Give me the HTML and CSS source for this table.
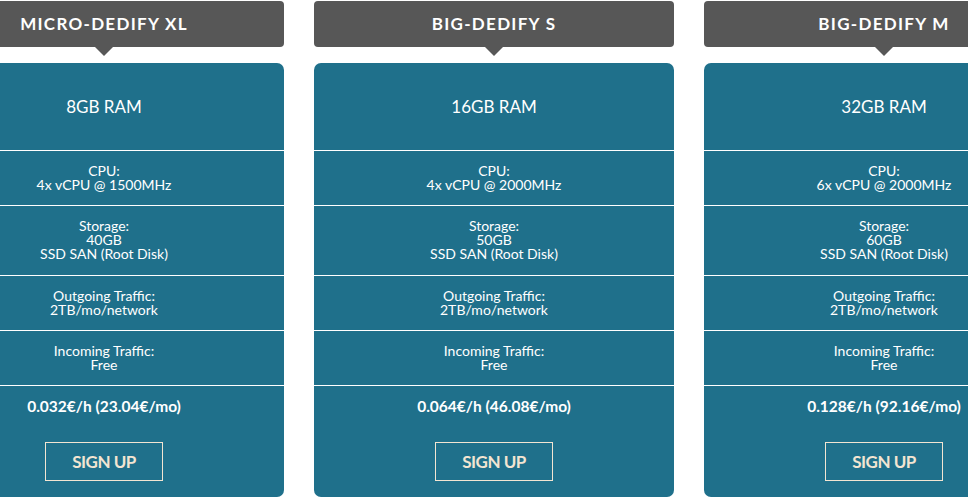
FILE: index.html
```html
<!DOCTYPE html>
<html>
<head>
<meta charset="utf-8">
<link rel="stylesheet" href="styles.css">
</head>
<body>
<div class="plans">
  <div class="plan">
    <div class="plan-head">MICRO-DEDIFY XL</div>
    <div class="plan-body">
      <div class="row row-ram">8GB RAM</div>
      <div class="row">CPU:<br>4x vCPU @ 1500MHz</div>
      <div class="row">Storage:<br>40GB<br>SSD SAN (Root Disk)</div>
      <div class="row">Outgoing Traffic:<br>2TB/mo/network</div>
      <div class="row">Incoming Traffic:<br>Free</div>
      <div class="row row-price">
        <div class="price">0.032€/h (23.04€/mo)</div>
        <a class="signup" href="#">SIGN UP</a>
      </div>
    </div>
  </div>
  <div class="plan">
    <div class="plan-head">BIG-DEDIFY S</div>
    <div class="plan-body">
      <div class="row row-ram">16GB RAM</div>
      <div class="row">CPU:<br>4x vCPU @ 2000MHz</div>
      <div class="row">Storage:<br>50GB<br>SSD SAN (Root Disk)</div>
      <div class="row">Outgoing Traffic:<br>2TB/mo/network</div>
      <div class="row">Incoming Traffic:<br>Free</div>
      <div class="row row-price">
        <div class="price">0.064€/h (46.08€/mo)</div>
        <a class="signup" href="#">SIGN UP</a>
      </div>
    </div>
  </div>
  <div class="plan">
    <div class="plan-head">BIG-DEDIFY M</div>
    <div class="plan-body">
      <div class="row row-ram">32GB RAM</div>
      <div class="row">CPU:<br>6x vCPU @ 2000MHz</div>
      <div class="row">Storage:<br>60GB<br>SSD SAN (Root Disk)</div>
      <div class="row">Outgoing Traffic:<br>2TB/mo/network</div>
      <div class="row">Incoming Traffic:<br>Free</div>
      <div class="row row-price">
        <div class="price">0.128€/h (92.16€/mo)</div>
        <a class="signup" href="#">SIGN UP</a>
      </div>
    </div>
  </div>
</div>
</body>
</html>
```
FILE: styles.css
```css
html, body {
  margin: 0;
  padding: 0;
  background: #ffffff;
  overflow: hidden;
}
body {
  font-family: Lato, "Open Sans", sans-serif;
  color: #ffffff;
}
.plans {
  display: flex;
  gap: 30px;
  margin-left: -76px;
  padding-top: 1px;
}
.plan {
  flex: 0 0 360px;
  width: 360px;
}
.plan-head {
  position: relative;
  height: 46px;
  line-height: 46px;
  background: #575757;
  border-radius: 4px;
  text-align: center;
  font-weight: 700;
  font-size: 17px;
  letter-spacing: 1.3px;
  color: #ffffff;
}
.plan-head::after {
  content: "";
  position: absolute;
  left: 50%;
  top: 46px;
  margin-left: -9px;
  border-left: 9px solid transparent;
  border-right: 9px solid transparent;
  border-top: 9px solid #575757;
}
.plan-body {
  margin-top: 16px;
  background: #1f708b;
  border-radius: 7px;
  text-align: center;
}
.row {
  border-top: 1px solid #ffffff;
  font-size: 14px;
  line-height: 14px;
  padding: 13px 0 13px;
  height: 28px;
}
.row:nth-child(3) {
  height: 42px;
  padding: 13px 0 14px;
}
.row-ram {
  border-top: none;
  height: 87px;
  padding: 0;
  line-height: 87px;
  font-size: 17px;
}
.row-price {
  height: auto;
  padding: 12px 0 16px;
}
.price {
  font-weight: 700;
  font-size: 15.5px;
  line-height: 16px;
}
.signup {
  display: block;
  box-sizing: border-box;
  width: 118px;
  height: 39px;
  margin: 28px auto 0;
  border: 1px solid #f3e5d2;
  color: #f3e5d2;
  text-decoration: none;
  font-weight: 700;
  font-size: 17px;
  line-height: 37px;
  letter-spacing: -0.5px;
}
```
